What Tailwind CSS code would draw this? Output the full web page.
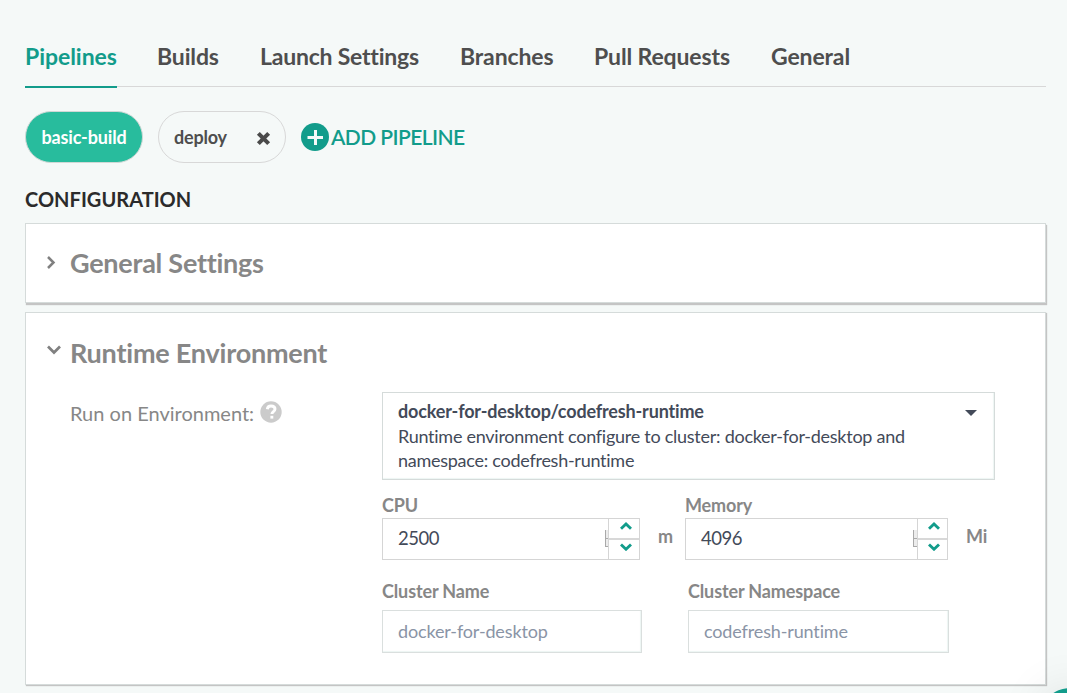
<!DOCTYPE html>
<html lang="en">
<head>
<meta charset="utf-8">
<title>Pipelines</title>
<script src="https://cdn.jsdelivr.net/npm/@tailwindcss/browser@4"></script>
</head>
<body class="relative h-[693px] w-[1067px] overflow-hidden bg-[#f5f9f8] pl-[25px] font-['Lato',sans-serif] whitespace-nowrap text-[#4e4e4e] [font-variant-ligatures:none]">
<nav class="flex h-[87px] w-[1021px] gap-[41px] border-b border-[#d8d8d8] pt-[40px] text-[23px] leading-8 font-bold tracking-[-0.13px]">
  <a class="h-[48px] w-[92px] border-b-2 border-[#129c8b] tracking-[-0.05px] text-[#129c8b]">Pipelines</a>
  <a class="-ml-px w-[62px]">Builds</a>
  <a class="w-[159px] tracking-[-0.22px]">Launch Settings</a>
  <a class="w-[93px]">Branches</a>
  <a class="w-[136px]">Pull Requests</a>
  <a>General</a>
</nav>
<div class="mt-6 flex h-[52px] items-center text-[18px] font-bold">
  <button class="h-[52px] w-[118px] rounded-[26px] border border-[#d0d8d6] bg-[#28bc9d] tracking-[-0.15px] text-white">basic-build</button>
  <button class="ml-[15px] flex h-[52px] w-[128px] items-center justify-between rounded-[26px] border border-[#d8d8d8] pr-[14px] pl-[15px] tracking-[-0.2px]">deploy
    <svg class="mt-[2px] size-[15px]" viewBox="0 0 14 14"><path d="M2.2 2.2l9.6 9.6M11.800 2.200l-9.600 9.600" stroke="#4a4a4a" stroke-width="3.800"/></svg>
  </button>
  <a class="ml-[15px] flex items-center gap-[2px] text-[21px] font-semibold tracking-[-0.58px] text-[#129c8b]">
    <svg class="size-7" viewBox="0 0 28 28"><circle cx="14" cy="14" r="14" fill="#129c8b"/><path d="M14.500 7v15M6.500 14.500h15.500" stroke="#f5f9f8" stroke-width="3"/></svg>
    <span>ADD PIPELINE</span>
  </a>
</div>
<h2 class="mt-[21px] h-[39px] text-[20px] leading-[30px] font-bold tracking-[0.02px] text-[#2b2b2b]">CONFIGURATION</h2>
<section class="flex h-[80px] w-[1021px] border border-[#d5dbda] bg-white pl-5 shadow-[1px_2px_1px_#c4c4c4]">
  <svg class="mt-[31px] h-4 w-3" viewBox="0 0 12 16"><path d="M2 2l5.500 5.500L2 13" fill="none" stroke="#808080" stroke-width="2.500"/></svg>
  <h3 class="ml-3 pt-[19px] text-[27px] leading-10 font-bold tracking-[-0.25px] text-[#878787]">General Settings</h3>
</section>
<section class="mt-[9px] h-[373px] w-[1021px] border border-[#d5dbda] bg-white shadow-[1px_1px_1px_#c4c4c4]">
  <div class="flex h-[79px] pl-5">
    <svg class="mt-[31px] h-3 w-4" viewBox="0 0 16 12"><path d="M2 2.500l6 6 6-6" fill="none" stroke="#808080" stroke-width="2.700"/></svg>
    <h3 class="ml-2 pt-[20px] text-[27px] leading-10 font-bold tracking-[-0.22px] text-[#878787]">Runtime Environment</h3>
  </div>
  <div class="flex">
    <div class="ml-[44px] flex h-10 w-[312px] gap-1.5 pt-[6px] text-[20px] leading-[30px] text-[#878787]">
      <span>Run on Environment:</span>
      <svg class="mt-[3px] size-[22px]" viewBox="0 0 22 22"><circle cx="11" cy="11" r="10.700" fill="#cbcbcb"/><path d="M7.300 8.200C7.600 6 9 5 11 5c2.300 0 4 1.200 4 3.100 0 2.700-3.100 2.400-3.100 4.900" fill="none" stroke="#fff" stroke-width="2.900"/><rect x="10.400" y="14.800" width="2.900" height="2.800" fill="#fff"/></svg>
    </div>
    <div class="w-[613px]">
      <div class="relative h-[88px] border border-[#d5dbda] pt-[6px] pl-[15px] text-[18px] leading-6 text-[#434a59] shadow-[inset_-1px_-1px_1px_#edf5f3]">
        <p class="h-[25px] leading-[25px] font-bold tracking-[-0.16px]">docker-for-desktop/codefresh-runtime</p>
        <p class="tracking-[-0.26px]">Runtime environment configure to cluster: docker-for-desktop and<br>namespace: codefresh-runtime</p>
        <svg class="absolute top-[17px] right-[17px] h-[6px] w-3" viewBox="0 0 12 6"><path d="M0 0h12L6 6z" fill="#434a59"/></svg>
      </div>
      <div class="mt-3 flex text-[18px] font-bold tracking-[-0.15px] text-[#878787]">
        <div class="w-[258px]">
          <div class="h-[26px] leading-[26px]">CPU</div>
          <div class="flex h-[42px] w-[258px] border border-[#d5d5d5]">
            <span class="w-[222px] pl-[15px] text-[18.500px] leading-[39px] font-normal tracking-[-0.5px] text-[#434a59]">2500</span>
            <span class="mt-[11px] h-[17px] w-[3px] border-b border-l border-[#a9a9a9] bg-[#ececec] pt-2"><i class="block h-px bg-[#a9a9a9]"></i></span>
            <span class="flex w-[31px] flex-col border-l border-[#d5d5d5]">
              <span class="flex h-[21px] items-center justify-center border-b-2 border-[#d8d8d8] pl-[4px]"><svg class="-mt-1.5 h-2 w-3" viewBox="0 0 12 8"><path d="M1 6.700L6 2l5 4.700" fill="none" stroke="#129c8b" stroke-width="2.900"/></svg></span>
              <span class="flex h-[19px] items-center justify-center pl-[4px]"><svg class="-mt-1.5 h-2 w-3" viewBox="0 0 12 8"><path d="M1 1.500L6 6.200l5-4.700" fill="none" stroke="#129c8b" stroke-width="2.900"/></svg></span>
            </span>
          </div>
        </div>
        <span class="ml-[18px] w-[27px] pt-[31px] leading-[26px]">m</span>
        <div class="w-[263px]">
          <div class="h-[26px] leading-[26px]">Memory</div>
          <div class="flex h-[42px] w-[263px] border border-[#d5d5d5]">
            <span class="w-[227px] pl-[15px] text-[18.500px] leading-[39px] font-normal tracking-[-0.5px] text-[#434a59]">4096</span>
            <span class="mt-[11px] h-[17px] w-1 border-b border-l border-[#a9a9a9] bg-[#ececec] pt-2"><i class="block h-px bg-[#a9a9a9]"></i></span>
            <span class="flex w-[30px] flex-col border-l border-[#d5d5d5]">
              <span class="flex h-[21px] items-center justify-center border-b-2 border-[#d8d8d8] pl-[3px]"><svg class="-mt-1.5 h-2 w-3" viewBox="0 0 12 8"><path d="M1 6.700L6 2l5 4.700" fill="none" stroke="#129c8b" stroke-width="2.900"/></svg></span>
              <span class="flex h-[19px] items-center justify-center pl-[3px]"><svg class="-mt-1.5 h-2 w-3" viewBox="0 0 12 8"><path d="M1 1.500L6 6.200l5-4.700" fill="none" stroke="#129c8b" stroke-width="2.900"/></svg></span>
            </span>
          </div>
        </div>
        <span class="ml-[18px] pt-[31px] leading-[26px]">Mi</span>
      </div>
      <div class="mt-[18px] flex gap-[46px] text-[18px]">
        <div class="w-[260px]">
          <div class="h-8 leading-[26px] font-bold tracking-[-0.13px] text-[#878787]">Cluster Name</div>
          <div class="h-[43px] border border-[#dadfde] pl-[15px] leading-[41px] tracking-[-0.14px] text-[#8a94a6] shadow-[inset_-1px_-1px_1px_#edf5f3]">docker-for-desktop</div>
        </div>
        <div class="w-[261px]">
          <div class="h-8 leading-[26px] font-bold tracking-[-0.13px] text-[#878787]">Cluster Namespace</div>
          <div class="h-[43px] border border-[#dadfde] pl-[15px] leading-[41px] tracking-[-0.14px] text-[#8a94a6] shadow-[inset_-1px_-1px_1px_#edf5f3]">codefresh-runtime</div>
        </div>
      </div>
    </div>
  </div>
</section>
<div class="absolute right-0 bottom-0 h-[63px] w-[87px] overflow-hidden"><div class="mt-[58px] ml-[60px] size-[60px] rounded-full bg-[#129c8b] shadow-[0_0_45px_rgba(0,0,0,0.1)]"></div></div>
</body>
</html>
